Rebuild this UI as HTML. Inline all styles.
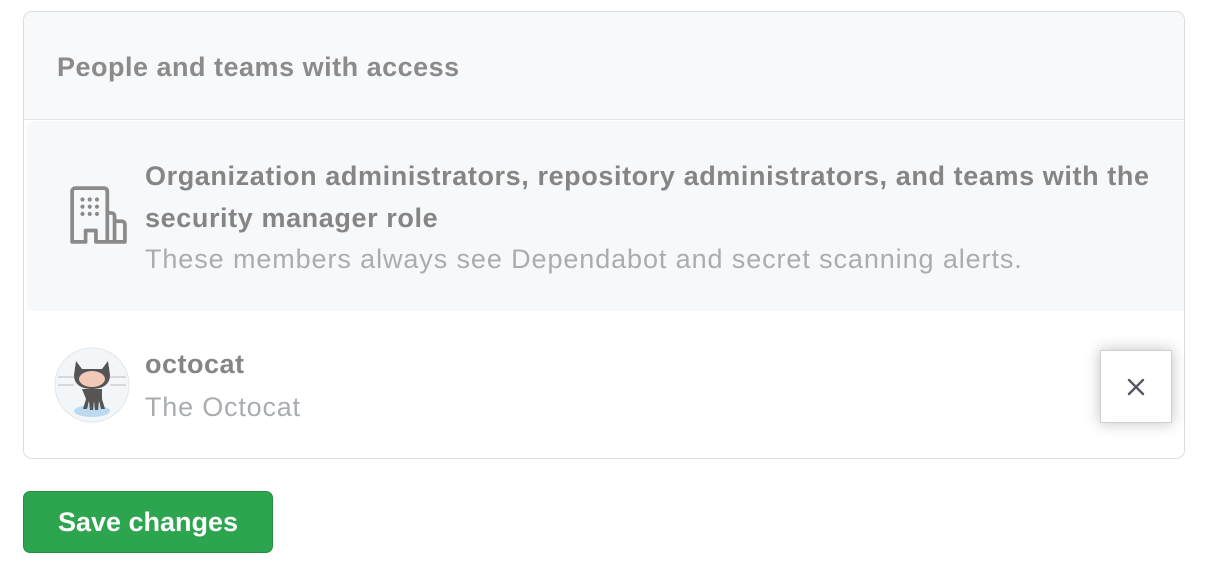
<!DOCTYPE html>
<html><head><style>
body{margin:0;width:1212px;height:572px;background:#fff;font-family:"Liberation Sans",sans-serif;position:relative;overflow:hidden}
.box{position:absolute;left:23px;top:11px;width:1160px;height:446px;border:1px solid #d9dce1;border-radius:9px;overflow:hidden;background:#fff}
.hdr{position:absolute;left:0;top:0;right:0;height:107px;background:#f8f9fb;border-bottom:1px solid #e1e4e8}
.hdr span{position:absolute;left:33px;top:40px;font-size:27px;letter-spacing:0.5px;font-weight:bold;color:#8b8b8b}
.org{position:absolute;left:3px;top:109px;right:0;height:190px;background:#f6f8fa;border-top-left-radius:8px}
.t{position:absolute;left:121px;font-size:27px}
.x{position:absolute;left:1100px;top:350px;width:70px;height:71px;background:#fff;border:1px solid #d0d0d0;box-shadow:0 0 14px rgba(0,0,0,.25)}
.btn{position:absolute;left:23px;top:491px;width:248px;height:60px;background:#2da44e;border:1px solid #278c43;border-radius:7px;color:#fff;font-size:27px;font-weight:bold;line-height:60px;text-align:center}
</style></head><body>
<div class="box">
<div class="hdr"><span>People and teams with access</span></div>
<div class="org">
<svg style="position:absolute;left:41px;top:64px" width="60" height="60" viewBox="0 0 58 58" fill="none" stroke="#8a8a8a" stroke-width="3.6" stroke-linejoin="round">
<path d="M4 55V6a3 3 0 0 1 3-3h28a3 3 0 0 1 3 3v49H27V44H17v11z"/><path d="M38 27h4a3 3 0 0 1 3 3v25h-7"/><path d="M45 55h10V38a3 3 0 0 0-3-3h-7"/>
<g fill="#8a8a8a" stroke="none"><circle cx="14" cy="14" r="2"/><circle cx="21" cy="14" r="2"/><circle cx="28" cy="14" r="2"/><circle cx="14" cy="21" r="2"/><circle cx="21" cy="21" r="2"/><circle cx="28" cy="21" r="2"/><circle cx="14" cy="28" r="2"/><circle cx="21" cy="28" r="2"/><circle cx="28" cy="28" r="2"/></g>
</svg>
</div>
<div class="t" style="top:143px;font-weight:bold;color:#858585;line-height:42px;letter-spacing:0.6px">Organization administrators, repository administrators, and teams with the<br>security manager role</div>
<div class="t" style="top:232px;color:#a9adb2;letter-spacing:0.9px">These members always see Dependabot and secret scanning alerts.</div>
<svg style="position:absolute;left:30px;top:335px" width="76" height="76" viewBox="0 0 76 76">
<circle cx="38" cy="38" r="37" fill="#f3f6f9" stroke="#e3e6ea"/>
<ellipse cx="38" cy="64" rx="18" ry="6" fill="#bcd9ef"/>
<path d="M22 14l6 8h20l6-8 2 14c0 10-8 14-18 14s-18-4-18-14z" fill="#555"/>
<ellipse cx="38" cy="32" rx="13" ry="8" fill="#f2c9b6"/>
<path d="M28 42h20v10l3 10h-4l-2-8-1 9h-3l-1-9-1 9h-3l-1-9-2 8h-4l3-10z" fill="#555"/>
<path d="M4 30h16M4 38h16M56 30h16M56 38h16" stroke="#bbb" stroke-width="1"/>
</svg>
<div class="t" style="top:337px;font-weight:bold;color:#858585;letter-spacing:0.5px">octocat</div>
<div class="t" style="top:380px;color:#a9adb2;letter-spacing:0.8px">The Octocat</div>
</div>
<div class="x"><svg style="position:absolute;left:25px;top:26px" width="20" height="20" viewBox="0 0 20 20" stroke="#555a61" stroke-width="2.4" stroke-linecap="round"><path d="M3 3l14 14M17 3L3 17"/></svg></div>
<div class="btn">Save changes</div>
</body></html>
